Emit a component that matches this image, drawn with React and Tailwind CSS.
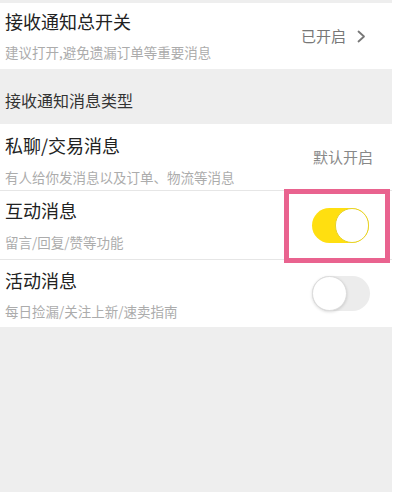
import React from "react";

const font = { fontFamily: '"Noto Sans CJK SC", "Noto Sans", sans-serif' };

function Chevron() {
  return (
    <svg width="9" height="13" viewBox="0 0 9 13" className="ml-[11px]">
      <path d="M1.5 1.5 L7 6.5 L1.5 11.5" fill="none" stroke="#777" strokeWidth="1.8" strokeLinecap="round" strokeLinejoin="round" />
    </svg>
  );
}

function ToggleOn() {
  return (
    <div className="relative w-[57px] h-[35px] rounded-full bg-[#ffdf10]">
      <div className="absolute right-0 top-0 w-[34px] h-[35px] rounded-full bg-white border-[1.5px] border-[#e6d22a]" />
    </div>
  );
}

function ToggleOff() {
  return (
    <div className="relative w-[58px] h-[35px] rounded-full bg-[#ececec]">
      <div className="absolute left-0 top-0 w-[35px] h-[35px] rounded-full bg-white border border-[#dcdcdc] shadow-[0_1px_3px_rgba(0,0,0,0.15)]" />
    </div>
  );
}

export default function App() {
  return (
    <div className="w-[400px] h-[492px] bg-white flex" style={font}>
      <div className="relative w-[392px] h-full bg-[#eeeeee] flex flex-col">
        <div className="h-[3px]" />
        {/* Row 1 */}
        <div className="h-[66px] bg-white flex items-center pl-[5px] pr-[26px]">
          <div className="flex-1 flex flex-col self-start pt-[6px]">
            <div className="text-[18px] leading-[24px] text-[#222]">接收通知总开关</div>
            <div className="mt-[10px] text-[13.5px] leading-[18px] text-[#acacac]">建议打开,避免遗漏订单等重要消息</div>
          </div>
          <div className="flex items-center text-[15px] text-[#777]">
            <span>已开启</span>
            <Chevron />
          </div>
        </div>
        {/* Section header */}
        <div className="h-[55px] flex items-center pl-[5px] pt-[6px]">
          <span className="text-[16px] leading-[22px] text-[#333]">接收通知消息类型</span>
        </div>
        {/* Row 2 */}
        <div className="h-[67px] bg-white border-b border-[#e6e6e6] flex items-center pl-[5px] pr-[19px]">
          <div className="flex-1 flex flex-col self-start pt-[9px]">
            <div className="text-[18px] leading-[24px] text-[#222]">私聊/交易消息</div>
            <div className="mt-[11px] text-[13.5px] leading-[18px] text-[#acacac]">有人给你发消息以及订单、物流等消息</div>
          </div>
          <div className="text-[15px] text-[#888]">默认开启</div>
        </div>
        {/* Row 3 */}
        <div className="h-[69px] bg-white border-b border-[#e6e6e6] flex items-center pl-[5px] pr-[23px]">
          <div className="flex-1 flex flex-col self-start pt-[7px]">
            <div className="text-[18px] leading-[24px] text-[#222]">互动消息</div>
            <div className="mt-[11px] text-[13.5px] leading-[18px] text-[#acacac]">留言/回复/赞等功能</div>
          </div>
          <ToggleOn />
        </div>
        {/* Row 4 */}
        <div className="h-[67px] bg-white flex items-center pl-[5px] pr-[22px]">
          <div className="flex-1 flex flex-col self-start pt-[8px]">
            <div className="text-[18px] leading-[24px] text-[#222]">活动消息</div>
            <div className="mt-[10px] text-[13.5px] leading-[18px] text-[#acacac]">每日捡漏/关注上新/速卖指南</div>
          </div>
          <ToggleOff />
        </div>
        {/* annotation box */}
        <div className="absolute left-[284px] top-[189px] w-[106px] h-[74px] border-[5px] border-[#e9638f]" />
      </div>
    </div>
  );
}
